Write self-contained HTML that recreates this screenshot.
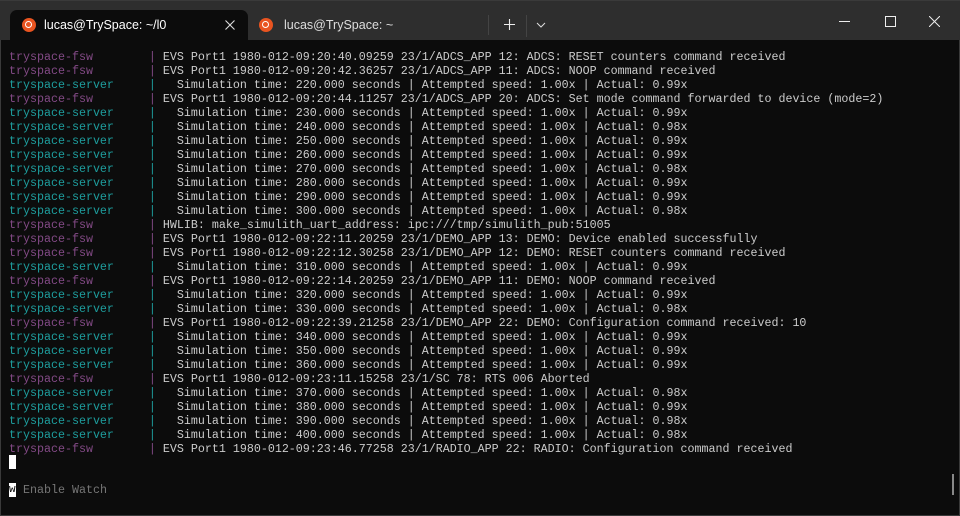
<!DOCTYPE html>
<html><head><meta charset="utf-8"><style>
body{margin:0;width:960px;height:516px;background:#0c0c0c;overflow:hidden;position:relative;font-family:"Liberation Sans",sans-serif}
#bar{position:absolute;left:0;top:0;width:960px;height:40px;background:#2e2e2e;border-top:1px solid #3a3a3a;box-sizing:border-box}
.tab{position:absolute;top:9px;height:31px;color:#fff;font-size:12.5px;line-height:31px}
#t1{left:10px;width:238px;background:#0c0c0c;border-radius:7px 7px 0 0}
#t2{left:250px;width:230px;color:#ddd}
.ub{position:absolute;top:8px;width:14px;height:14px;border-radius:50%;background:#e95420}
.ub:after{content:"";position:absolute;left:3px;top:3px;width:5px;height:5px;border:1.3px solid #fff;border-radius:50%}
pre{position:absolute;left:9px;top:50px;margin:0;font-family:"Liberation Mono",monospace;font-size:11.67px;line-height:14px;color:#cccccc}
.p{color:#834a86}.c{color:#1e9e9e}
</style></head><body>
<div id="bar">
<div class="tab" id="t1"><div class="ub" style="left:12px"></div><span style="position:absolute;left:34px">lucas@TrySpace: ~/l0</span><svg style="position:absolute;left:215px;top:10px" width="10" height="10"><path d="M0.5 0.5L9.5 9.5M9.5 0.5L0.5 9.5" stroke="#ddd" stroke-width="1.1"/></svg></div>
<div class="tab" id="t2"><div class="ub" style="left:9px"></div><span style="position:absolute;left:34px">lucas@TrySpace: ~</span></div>
<div style="position:absolute;left:488px;top:14px;width:1px;height:20px;background:#444"></div>
<div style="position:absolute;left:526px;top:14px;width:1px;height:22px;background:#444"></div>
<svg style="position:absolute;left:504px;top:18px" width="11" height="11"><path d="M5.5 0v11M0 5.5h11" stroke="#eee" stroke-width="1.1"/></svg>
<svg style="position:absolute;left:536px;top:21px" width="10" height="6"><path d="M1 1l4 4 4-4" stroke="#ddd" fill="none"/></svg>
<div style="position:absolute;left:839px;top:20px;width:11px;height:1px;background:#eee"></div>
<div style="position:absolute;left:885px;top:15px;width:9px;height:9px;border:1px solid #eee"></div>
<svg style="position:absolute;left:929px;top:15px" width="11" height="11"><path d="M0 0L11 11M11 0L0 11" stroke="#eee"/></svg>
</div>
<pre><span class="p">tryspace-fsw        |</span> EVS Port1 1980-012-09:20:40.09259 23/1/ADCS_APP 12: ADCS: RESET counters command received
<span class="p">tryspace-fsw        |</span> EVS Port1 1980-012-09:20:42.36257 23/1/ADCS_APP 11: ADCS: NOOP command received
<span class="c">tryspace-server     |</span>   Simulation time: 220.000 seconds | Attempted speed: 1.00x | Actual: 0.99x
<span class="p">tryspace-fsw        |</span> EVS Port1 1980-012-09:20:44.11257 23/1/ADCS_APP 20: ADCS: Set mode command forwarded to device (mode=2)
<span class="c">tryspace-server     |</span>   Simulation time: 230.000 seconds | Attempted speed: 1.00x | Actual: 0.99x
<span class="c">tryspace-server     |</span>   Simulation time: 240.000 seconds | Attempted speed: 1.00x | Actual: 0.98x
<span class="c">tryspace-server     |</span>   Simulation time: 250.000 seconds | Attempted speed: 1.00x | Actual: 0.99x
<span class="c">tryspace-server     |</span>   Simulation time: 260.000 seconds | Attempted speed: 1.00x | Actual: 0.99x
<span class="c">tryspace-server     |</span>   Simulation time: 270.000 seconds | Attempted speed: 1.00x | Actual: 0.98x
<span class="c">tryspace-server     |</span>   Simulation time: 280.000 seconds | Attempted speed: 1.00x | Actual: 0.99x
<span class="c">tryspace-server     |</span>   Simulation time: 290.000 seconds | Attempted speed: 1.00x | Actual: 0.99x
<span class="c">tryspace-server     |</span>   Simulation time: 300.000 seconds | Attempted speed: 1.00x | Actual: 0.98x
<span class="p">tryspace-fsw        |</span> HWLIB: make_simulith_uart_address: ipc:///tmp/simulith_pub:51005
<span class="p">tryspace-fsw        |</span> EVS Port1 1980-012-09:22:11.20259 23/1/DEMO_APP 13: DEMO: Device enabled successfully
<span class="p">tryspace-fsw        |</span> EVS Port1 1980-012-09:22:12.30258 23/1/DEMO_APP 12: DEMO: RESET counters command received
<span class="c">tryspace-server     |</span>   Simulation time: 310.000 seconds | Attempted speed: 1.00x | Actual: 0.99x
<span class="p">tryspace-fsw        |</span> EVS Port1 1980-012-09:22:14.20259 23/1/DEMO_APP 11: DEMO: NOOP command received
<span class="c">tryspace-server     |</span>   Simulation time: 320.000 seconds | Attempted speed: 1.00x | Actual: 0.99x
<span class="c">tryspace-server     |</span>   Simulation time: 330.000 seconds | Attempted speed: 1.00x | Actual: 0.98x
<span class="p">tryspace-fsw        |</span> EVS Port1 1980-012-09:22:39.21258 23/1/DEMO_APP 22: DEMO: Configuration command received: 10
<span class="c">tryspace-server     |</span>   Simulation time: 340.000 seconds | Attempted speed: 1.00x | Actual: 0.99x
<span class="c">tryspace-server     |</span>   Simulation time: 350.000 seconds | Attempted speed: 1.00x | Actual: 0.99x
<span class="c">tryspace-server     |</span>   Simulation time: 360.000 seconds | Attempted speed: 1.00x | Actual: 0.99x
<span class="p">tryspace-fsw        |</span> EVS Port1 1980-012-09:23:11.15258 23/1/SC 78: RTS 006 Aborted
<span class="c">tryspace-server     |</span>   Simulation time: 370.000 seconds | Attempted speed: 1.00x | Actual: 0.98x
<span class="c">tryspace-server     |</span>   Simulation time: 380.000 seconds | Attempted speed: 1.00x | Actual: 0.99x
<span class="c">tryspace-server     |</span>   Simulation time: 390.000 seconds | Attempted speed: 1.00x | Actual: 0.98x
<span class="c">tryspace-server     |</span>   Simulation time: 400.000 seconds | Attempted speed: 1.00x | Actual: 0.98x
<span class="p">tryspace-fsw        |</span> EVS Port1 1980-012-09:23:46.77258 23/1/RADIO_APP 22: RADIO: Configuration command received</pre>
<div style="position:absolute;left:9px;top:455px;width:7px;height:14px;background:#fff"></div>
<div style="position:absolute;left:9px;top:483px;width:7px;height:14px;background:#fff;color:#000;font:11px 'Liberation Mono',monospace;line-height:14px">w</div>
<div style="position:absolute;left:23px;top:483px;color:#767676;font:11.67px 'Liberation Mono',monospace;line-height:14px">Enable Watch</div>
<div style="position:absolute;left:952px;top:474px;width:2px;height:21px;background:#888"></div>
<div style="position:absolute;left:0;top:40px;width:1px;height:476px;background:#3a3a3a"></div>
<div style="position:absolute;right:0;top:40px;width:1px;height:476px;background:#3a3a3a"></div>
<div style="position:absolute;left:0;bottom:0;width:960px;height:1px;background:#3a3a3a"></div>
</body></html>
